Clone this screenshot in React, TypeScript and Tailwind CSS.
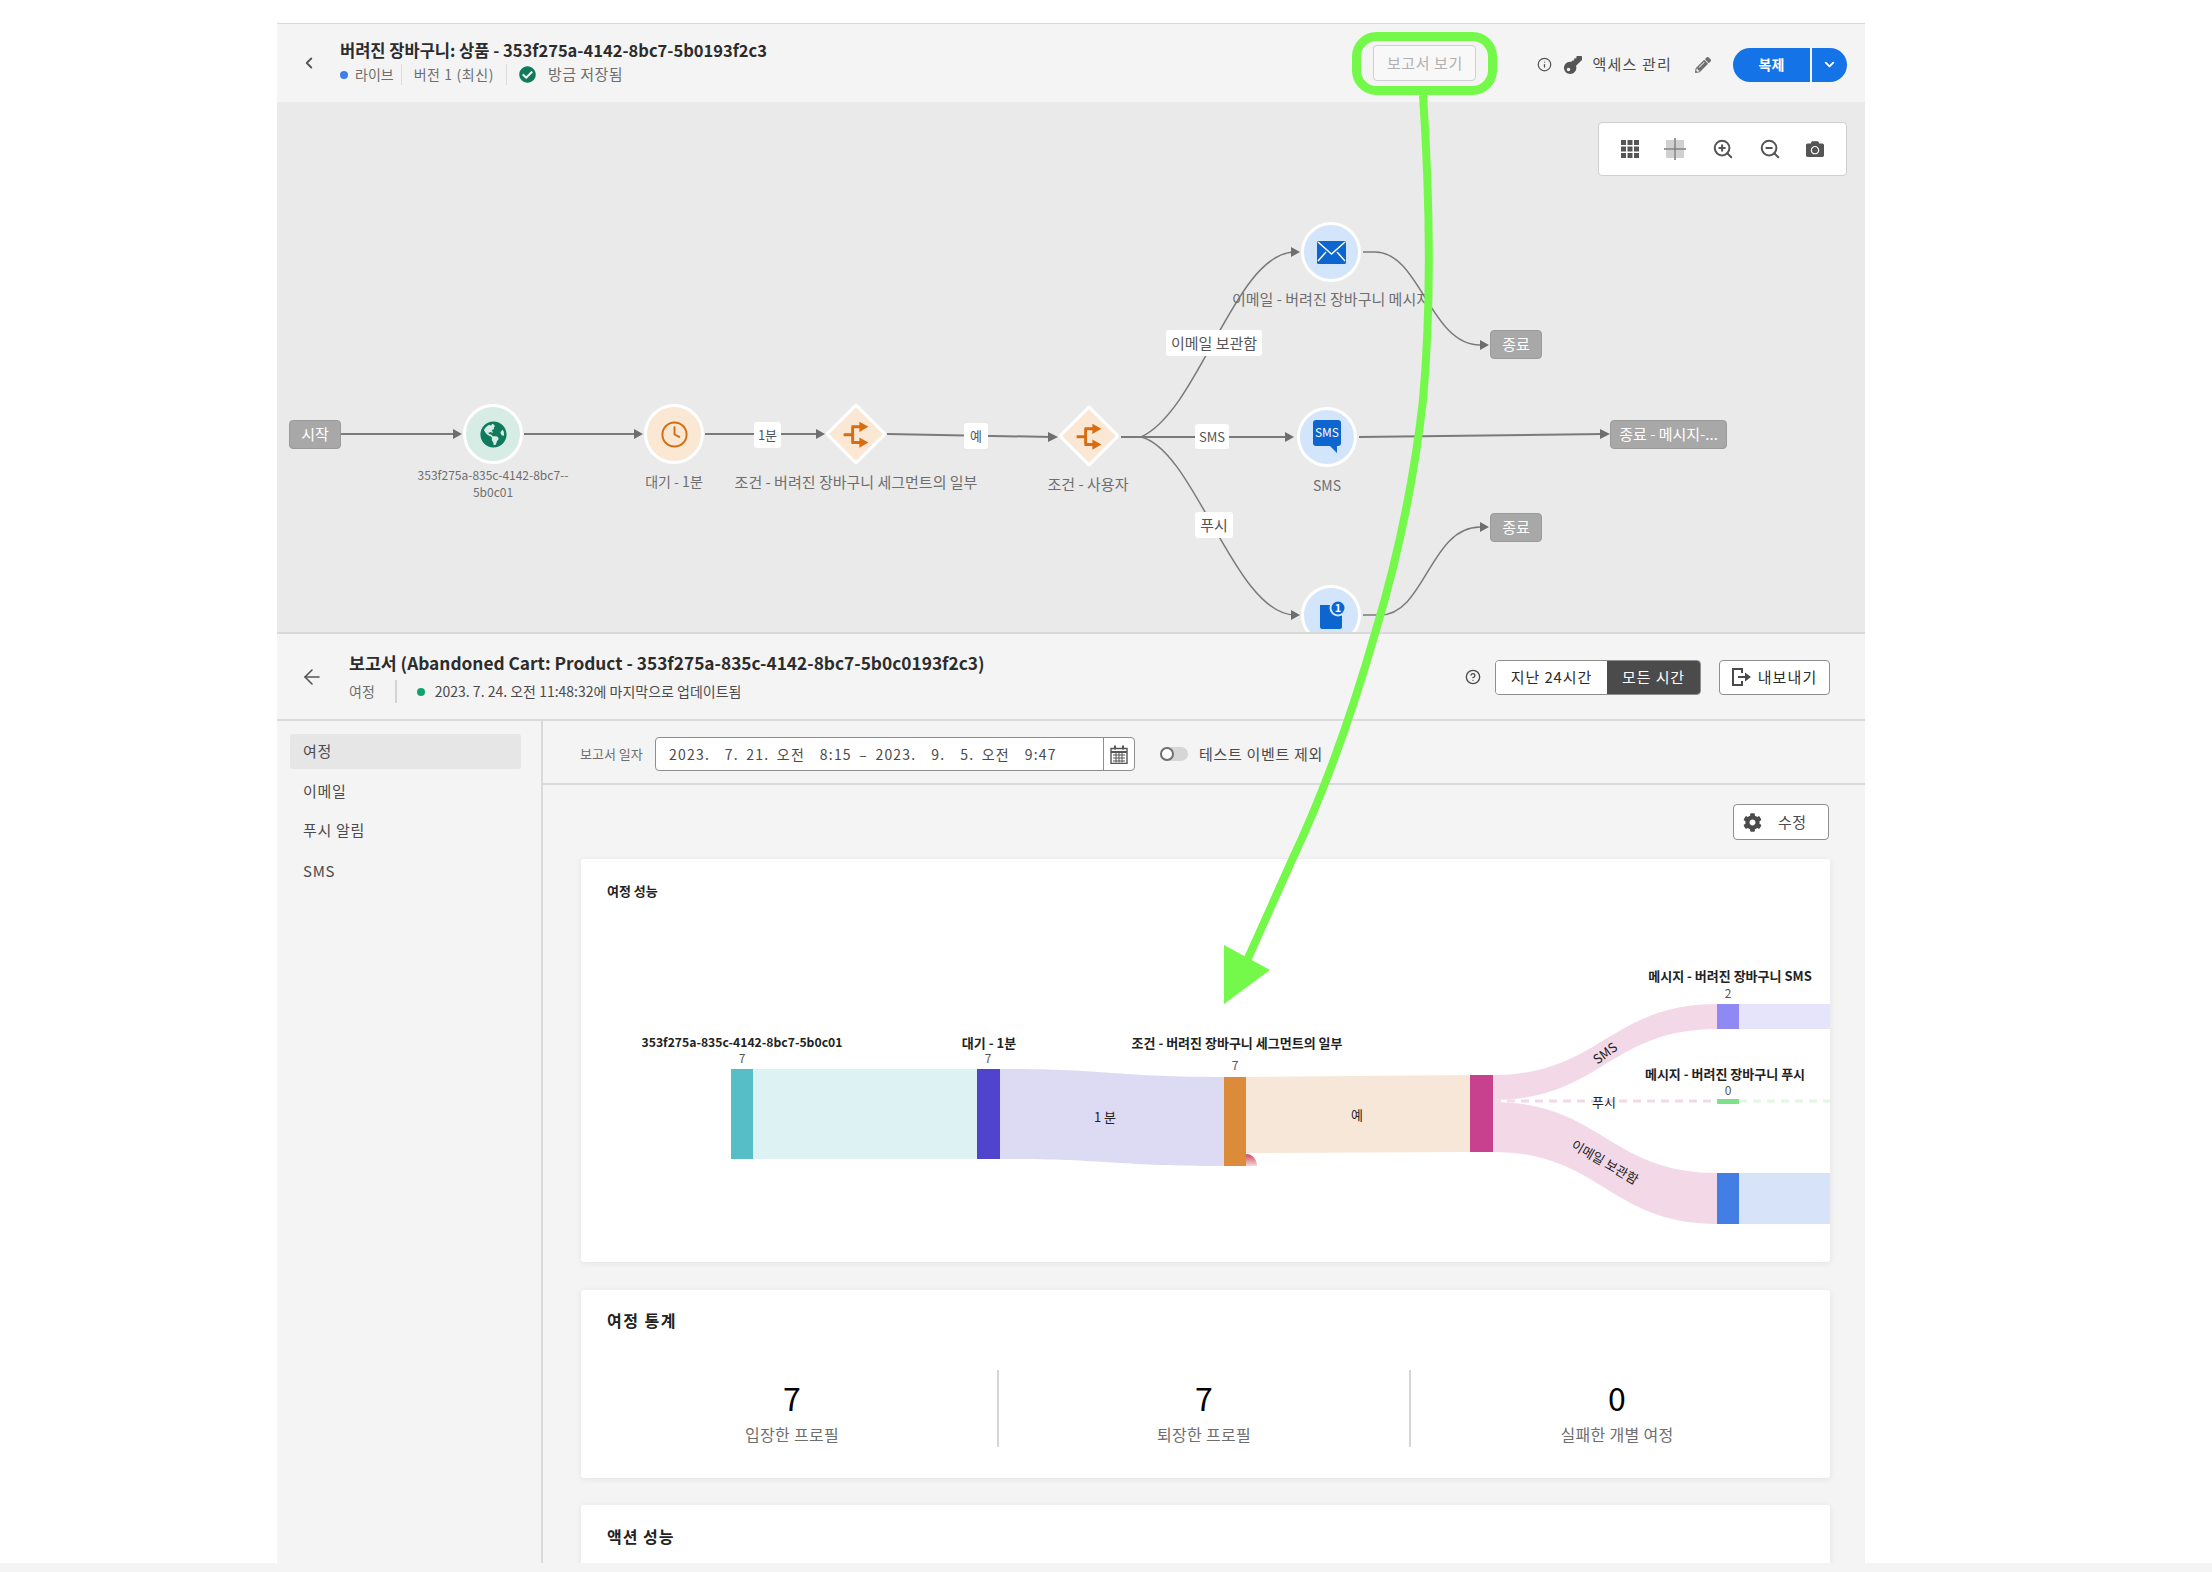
import { ChevronDown, ChevronLeft, CircleHelp, Clock, Info, ZoomIn, ZoomOut, ArrowLeft } from "lucide-react";
import { FaCamera, FaCheckCircle, FaCog, FaGlobeAmericas, FaKey, FaPencilAlt } from "react-icons/fa";

function BranchIcon() {
  return (
    <svg width="27" height="27" viewBox="0 0 24 24" className="-rotate-45">
      <path d="M1 12h8M9 5v14M8 5h9M8 19h9" fill="none" stroke="#d86c11" strokeWidth="2.6" />
      <path d="M15 0.5L23 5l-8 4.5zM15 14.5l8 4.5-8 4.5z" fill="#d86c11" />
    </svg>
  );
}

function Chip({ className, children }: { className: string; children: string }) {
  return (
    <div className={`absolute flex items-center justify-center rounded-[3px] bg-white text-[#555] ${className}`}>
      {children}
    </div>
  );
}

function EndNode({ className, children }: { className: string; children: string }) {
  return (
    <div className={`absolute flex h-[29px] items-center justify-center rounded-[4px] border border-[#9a9a9a] bg-[#a8a8a8] text-[15px] text-white ${className}`}>
      {children}
    </div>
  );
}

function Label({ className, children }: { className: string; children: React.ReactNode }) {
  return <div className={`absolute text-center leading-[17px] text-[#6e6e6e] ${className}`}>{children}</div>;
}

function Edges() {
  return (
    <svg className="absolute inset-0" width="1588" height="530" viewBox="0 0 1588 530" fill="none">
      <g stroke="#7a7a7a" strokeWidth="2">
        <path d="M64 332H180" />
        <path d="M247 332H360" />
        <path d="M428 332H541" />
        <path d="M610 332L775 335" />
        <path d="M844 335H1010" />
        <path d="M1082 335L1327 332" />
      </g>
      <g stroke="#7a7a7a" strokeWidth="1.5">
        <path d="M864 335C923 308 958 150 1018 150" />
        <path d="M864 335C918 348 958 513 1018 513" />
        <path d="M1086 150H1098C1143 150 1153 243 1203 243" />
        <path d="M1086 513H1103C1148 513 1153 425 1203 425" />
      </g>
      <g fill="#6e6e6e">
        <path d="M176 327l9 5-9 5z" />
        <path d="M357 327l9 5-9 5z" />
        <path d="M539 327l9 5-9 5z" />
        <path d="M771 330l10 5-10 5z" />
        <path d="M1008 330l9 5-9 5z" />
        <path d="M1014 145l9 5-9 5z" />
        <path d="M1014 508l9 5-9 5z" />
        <path d="M1203 238l9 5-9 5z" />
        <path d="M1203 420l9 5-9 5z" />
        <path d="M1323 327l10 5-10 5z" />
      </g>
    </svg>
  );
}

function Canvas() {
  return (
    <div className="relative h-[530px] overflow-hidden bg-[#eaeaea]">
      <Edges />
      <EndNode className="left-[12px] top-[318px] w-[52px]">시작</EndNode>

      <div className="absolute left-[186px] top-[302px] flex h-[60px] w-[60px] items-center justify-center rounded-full border-[3px] border-white bg-[#d6ece4]">
        <FaGlobeAmericas size={27} color="#0f7a5c" />
      </div>
      <Label className="left-[116px] top-[364px] w-[200px] text-[12px]">
        353f275a-835c-4142-8bc7--
        <br />
        5b0c01
      </Label>

      <div className="absolute left-[367px] top-[302px] flex h-[60px] w-[60px] items-center justify-center rounded-full border-[3px] border-white bg-[#fae8d4]">
        <Clock size={29} color="#d86c11" strokeWidth={1.6} />
      </div>
      <Label className="left-[347px] top-[371px] w-[100px] text-[14px]">대기 - 1분</Label>

      <Chip className="left-[477px] top-[320px] h-[26px] w-[27px] text-[13px]">1분</Chip>

      <div className="absolute left-[557px] top-[310px] flex h-[44px] w-[44px] rotate-45 items-center justify-center rounded-[2px] border-[3px] border-white bg-[#fae8d4]">
        <BranchIcon />
      </div>
      <Label className="left-[429px] top-[371px] w-[300px] text-[15px]">조건 - 버려진 장바구니 세그먼트의 일부</Label>

      <Chip className="left-[687px] top-[321px] h-[26px] w-[24px] text-[13px]">예</Chip>

      <div className="absolute left-[790px] top-[312px] flex h-[44px] w-[44px] rotate-45 items-center justify-center rounded-[2px] border-[3px] border-white bg-[#fae8d4]">
        <BranchIcon />
      </div>
      <Label className="left-[731px] top-[373px] w-[160px] text-[15px]">조건 - 사용자</Label>

      <Chip className="left-[889px] top-[228px] h-[26px] w-[96px] text-[15px]">이메일 보관함</Chip>
      <Chip className="left-[918px] top-[322px] h-[25px] w-[34px] text-[13px]">SMS</Chip>
      <Chip className="left-[918px] top-[410px] h-[26px] w-[38px] text-[15px]">푸시</Chip>

      <div className="absolute left-[1024px] top-[120px] flex h-[60px] w-[60px] items-center justify-center rounded-full border-[3px] border-white bg-[#d3e5fb]">
        <svg width="29" height="23" viewBox="0 0 29 23">
          <rect width="29" height="23" rx="1.5" fill="#0d66d0" />
          <path d="M1 1l13.5 12L28 1M1 20l8-9M28 20l-8-9" fill="none" stroke="#fff" strokeWidth="1.4" />
        </svg>
      </div>
      <Label className="left-[924px] top-[188px] w-[260px] whitespace-nowrap text-[15px]">이메일 - 버려진 장바구니 메시지</Label>

      <div className="absolute left-[1020px] top-[305px] flex h-[60px] w-[60px] items-center justify-center rounded-full border-[3px] border-white bg-[#d3e5fb]">
        <svg width="30" height="36" viewBox="0 0 30 36">
          <path d="M4 1h22a3 3 0 0 1 3 3v20a3 3 0 0 1-3 3h-1v7l-7-7H4a3 3 0 0 1-3-3V4a3 3 0 0 1 3-3z" fill="#0d66d0" />
          <text x="15" y="18" textAnchor="middle" fill="#fff" className="text-[12px]">SMS</text>
        </svg>
      </div>
      <Label className="left-[1000px] top-[375px] w-[100px] text-[14px]">SMS</Label>

      <div className="absolute left-[1024px] top-[483px] flex h-[60px] w-[60px] items-center justify-center rounded-full border-[3px] border-white bg-[#d3e5fb]">
        <svg width="30" height="32" viewBox="0 0 30 32">
          <path d="M4 6h14v6h8v16a2 2 0 0 1-2 2H6a2 2 0 0 1-2-2z" fill="#0d66d0" />
          <circle cx="22" cy="9" r="8.5" fill="#d3e5fb" />
          <circle cx="22" cy="9" r="6.5" fill="#0d66d0" />
          <text x="22" y="13" textAnchor="middle" fill="#fff" className="text-[11px] font-bold">1</text>
        </svg>
      </div>

      <EndNode className="left-[1213px] top-[228px] w-[52px]">종료</EndNode>
      <EndNode className="left-[1333px] top-[318px] w-[117px]">종료 - 메시지-...</EndNode>
      <EndNode className="left-[1213px] top-[411px] w-[52px]">종료</EndNode>

      <div className="absolute left-[1321px] top-[20px] flex h-[54px] w-[249px] items-center justify-between rounded-[4px] border border-[#cfcfcf] bg-white px-[22px] text-[#555]">
        <svg width="18" height="18" viewBox="0 0 18 18" fill="#555">
          <path d="M0 0h5v5H0zM6.500 0h5v5h-5zM13 0h5v5h-5zM0 6.500h5v5H0zM6.500 6.500h5v5h-5zM13 6.500h5v5h-5zM0 13h5v5H0zM6.500 13h5v5h-5zM13 13h5v5h-5z" />
        </svg>
        <svg width="22" height="22" viewBox="0 0 22 22">
          <path d="M2 2h8v8H2zM12 2h8v8h-8zM2 12h8v8H2zM12 12h8v8h-8z" fill="#d0d0d0" />
          <path d="M11 0v22M0 11h22" stroke="#777" strokeWidth="1.5" />
        </svg>
        <ZoomIn size={22} strokeWidth={2.2} />
        <ZoomOut size={22} strokeWidth={2.2} />
        <FaCamera size={18} />
      </div>
    </div>
  );
}

function TopBar() {
  return (
    <div className="flex h-[78px] items-center bg-[#f4f4f4] pr-[18px]">
      <div className="flex w-[63px] justify-center">
        <ChevronLeft size={18} color="#555" strokeWidth={2.5} />
      </div>
      <div className="pb-[4px]">
        <div className="text-[16.500px] font-semibold leading-[22px] text-[#2c2c2c]">버려진 장바구니: 상품 - 353f275a-4142-8bc7-5b0193f2c3</div>
        <div className="mt-[5px] flex h-[18px] items-center text-[14px] text-[#6e6e6e]">
          <span className="h-[8px] w-[8px] rounded-full bg-[#3f7de8]" />
          <span className="ml-[7px] border-r border-[#dcdcdc] pr-[7px]">라이브</span>
          <span className="ml-[12px] border-r border-[#dcdcdc] pr-[12px] tracking-[0.6px]">버전 1 (최신)</span>
          <FaCheckCircle size={17} color="#0f7a5c" className="ml-[12px]" />
          <span className="ml-[12px] text-[15px] tracking-[0.4px]">방금 저장됨</span>
        </div>
      </div>
      <button className="ml-auto flex h-[36px] w-[103px] items-center justify-center rounded-[4px] border border-[#d0d0d0] bg-[#f8f8f8] text-[15px] tracking-[0.6px] text-[#b0b0b0]">보고서 보기</button>
      <div className="flex items-center pt-[3px]">
        <Info size={15} color="#555" className="ml-[61px]" />
        <FaKey size={18} color="#555" className="ml-[12px] rotate-180" />
        <span className="ml-[10px] text-[15px] tracking-[1.2px] text-[#4b4b4b]">액세스 관리</span>
        <FaPencilAlt size={16} color="#6e6e6e" className="ml-[23px]" />
        <div className="ml-[22px] flex h-[34px] w-[114px] overflow-hidden rounded-full text-white">
          <div className="flex w-[77px] items-center justify-center bg-[#1473e6] text-[14px] font-semibold">복제</div>
          <div className="ml-[2px] flex flex-1 items-center justify-center bg-[#1473e6]">
            <ChevronDown size={15} strokeWidth={3} />
          </div>
        </div>
      </div>
    </div>
  );
}

function ReportHeader() {
  return (
    <div className="flex h-[89px] items-center border-y-2 border-[#dadada] bg-[#f4f4f4] pr-[35px] pt-[1px]">
      <div className="flex w-[72px] justify-center">
        <ArrowLeft size={24} color="#555" strokeWidth={1.6} className="mr-[2px]" />
      </div>
      <div>
        <div className="text-[17.300px] font-semibold leading-[24px] text-[#2c2c2c]">보고서 (Abandoned Cart: Product - 353f275a-835c-4142-8bc7-5b0c0193f2c3)</div>
        <div className="mt-[5px] flex h-[23px] items-center text-[14px] text-[#4b4b4b]">
          <span className="text-[#6e6e6e]">여정</span>
          <span className="ml-[20px] h-full w-[2px] bg-[#d4d4d4]" />
          <span className="ml-[20px] h-[8px] w-[8px] rounded-full bg-[#12a26c]" />
          <span className="ml-[10px]">2023. 7. 24. 오전 11:48:32에 마지막으로 업데이트됨</span>
        </div>
      </div>
      <CircleHelp size={16} color="#4b4b4b" strokeWidth={2} className="ml-auto" />
      <div className="ml-[14px] flex h-[35px] w-[206px] overflow-hidden rounded-[4px] border border-[#8e8e8e] text-[15px] tracking-[0.9px]">
        <div className="flex w-[111px] items-center justify-center bg-white text-[#2c2c2c]">지난 24시간</div>
        <div className="flex flex-1 items-center justify-center bg-[#4b4b4b] text-white">모든 시간</div>
      </div>
      <button className="ml-[18px] flex h-[35px] w-[111px] items-center justify-center gap-[7px] rounded-[4px] border border-[#8e8e8e] bg-white text-[15px] tracking-[1.1px] text-[#2c2c2c]">
        <svg width="19" height="18" viewBox="0 0 19 18" fill="#4b4b4b">
          <path d="M0 0h11v5H9V2H2v14h7v-3h2v5H0z" />
          <path d="M6 8h7V4.500L19 9l-6 4.500V10H6z" />
        </svg>
        내보내기
      </button>
    </div>
  );
}

function Sidebar() {
  return (
    <div className="h-full w-[266px] shrink-0 border-r-2 border-[#dadada] pl-[13px] pr-[20px] pt-[13px] text-[15px] tracking-[0.7px] text-[#4b4b4b]">
      <div className="flex h-[35px] items-center rounded-[3px] bg-[#e6e6e6] pl-[13px]">여정</div>
      <div className="mt-[5px] flex h-[35px] items-center pl-[13px]">이메일</div>
      <div className="mt-[4px] flex h-[35px] items-center pl-[13px]">푸시 알림</div>
      <div className="mt-[6px] flex h-[35px] items-center pl-[13px]">SMS</div>
    </div>
  );
}

function DateBar() {
  return (
    <div className="flex h-[64px] items-center border-b-2 border-[#dadada] pl-[37px] pt-[4px]">
      <span className="w-[75px] text-[13px] text-[#6e6e6e]">보고서 일자</span>
      <div className="flex h-[34px] w-[480px] items-center rounded-[4px] border border-[#8e8e8e] bg-white text-[14px] text-[#4b4b4b]">
        <span className="w-[447px] whitespace-pre pl-[13px] tracking-[1.2px] [word-spacing:3.1px]">2023.  7. 21. 오전  8:15 – 2023.  9.  5. 오전  9:47</span>
        <div className="flex h-full flex-1 items-center justify-center border-l border-[#8e8e8e]">
          <svg width="18" height="19" viewBox="0 0 18 19" fill="none" stroke="#555">
            <path d="M1 3.500h16v15H1z" strokeWidth="1.400" />
            <path d="M1 7h16" strokeWidth="2" />
            <path d="M5 0.500v4M13 0.500v4" strokeWidth="2" />
            <path d="M3 10h12M3 13h12M3 16h12M6 8v9.500M9 8v9.500M12 8v9.500" strokeWidth="1" />
          </svg>
        </div>
      </div>
      <div className="relative ml-[25px] h-[14px] w-[28px] rounded-full bg-[#d6d6d6]">
        <div className="absolute left-0 top-0 h-[14px] w-[14px] rounded-full border-2 border-[#6e6e6e] bg-white" />
      </div>
      <span className="ml-[11px] text-[15px] tracking-[0.7px] text-[#4b4b4b]">테스트 이벤트 제외</span>
    </div>
  );
}

function Sankey() {
  return (
    <svg className="block" width="1249" height="352" viewBox="581 910 1249 352">
      <defs>
        <linearGradient id="red-tip" x1="0" y1="0" x2="0" y2="1">
          <stop offset="0" stopColor="#cc4a58" />
          <stop offset="1" stopColor="#f4d8da" />
        </linearGradient>
      </defs>
      <path d="M753 1069H977V1159H753z" fill="#ddf2f2" />
      <path d="M1000 1069C1112 1069 1112 1077 1224 1077V1166C1112 1166 1112 1159 1000 1159z" fill="#dddaf4" />
      <path d="M1246 1077L1470 1075V1152L1246 1153z" fill="#f7e7d8" />
      <path d="M1246 1154C1253 1154 1257 1160 1257 1166H1246z" fill="url(#red-tip)" />
      <path d="M1493 1075C1600 1075 1610 1004 1717 1004V1029C1610 1029 1600 1100 1493 1100z" fill="#f3d9e8" />
      <path d="M1493 1102C1600 1102 1610 1173 1717 1173V1224C1610 1224 1600 1152 1493 1152z" fill="#f3d9e8" />
      <path d="M1493 1101H1717" stroke="#f3d9e8" strokeWidth="3" strokeDasharray="8 6" />
      <path d="M1739 1101H1830" stroke="#e2f8e2" strokeWidth="3" strokeDasharray="8 6" />
      <path d="M1739 1004H1830V1029H1739z" fill="#e6e4fa" />
      <path d="M1739 1173H1830V1224H1739z" fill="#d6e3f8" />

      <path d="M731 1069H753V1159H731z" fill="#56bec6" />
      <path d="M977 1069H1000V1159H977z" fill="#5044cc" />
      <path d="M1224 1077H1246V1166H1224z" fill="#db8b3a" />
      <path d="M1470 1075H1493V1152H1470z" fill="#c8418e" />
      <path d="M1717 1004H1739V1029H1717z" fill="#9089f3" />
      <path d="M1717 1099H1739V1104H1717z" fill="#7fe08a" />
      <path d="M1717 1173H1739V1224H1717z" fill="#437ee4" />

      <g className="text-[13px] font-semibold" fill="#222" textAnchor="middle">
        <text x="742" y="1047" className="text-[12.200px]">353f275a-835c-4142-8bc7-5b0c01</text>
        <text x="989" y="1048">대기 - 1분</text>
        <text x="1237" y="1048">조건 - 버려진 장바구니 세그먼트의 일부</text>
        <text x="1730" y="981">메시지 - 버려진 장바구니 SMS</text>
        <text x="1725" y="1079">메시지 - 버려진 장바구니 푸시</text>
      </g>
      <g className="text-[12px]" fill="#555" textAnchor="middle">
        <text x="742" y="1063">7</text>
        <text x="988" y="1063">7</text>
        <text x="1235" y="1070">7</text>
        <text x="1728" y="998">2</text>
        <text x="1728" y="1095">0</text>
      </g>
      <g className="text-[13px]" fill="#222" textAnchor="middle">
        <text x="1105" y="1122">1 분</text>
        <text x="1357" y="1120">예</text>
        <text x="1604" y="1107">푸시</text>
        <text x="1605" y="1058" transform="rotate(-37 1605 1053)">SMS</text>
        <text x="1605" y="1167" transform="rotate(30 1605 1162)">이메일 보관함</text>
      </g>
    </svg>
  );
}

const stats = [
  { value: "7", label: "입장한 프로필" },
  { value: "7", label: "퇴장한 프로필" },
  { value: "0", label: "실패한 개별 여정" },
];

function Report() {
  return (
    <div className="h-full overflow-hidden">
      <DateBar />
      <div className="pl-[38px] pr-[35px] pt-[19px]">
        <div className="flex justify-end pr-[1px]">
          <button className="flex h-[36px] w-[96px] items-center rounded-[4px] border border-[#8e8e8e] bg-white pl-[9px] text-[15px] text-[#4b4b4b]">
            <FaCog size={19} color="#4b4b4b" />
            <span className="ml-[16px] tracking-[0.5px]">수정</span>
          </button>
        </div>

        <div className="mt-[19px] h-[403px] rounded-[3px] bg-white shadow-[0_1px_6px_rgba(0,0,0,0.08)]">
          <div className="h-[51px] pl-[26px] pt-[23px] text-[13px] font-semibold leading-[18px] text-[#222]">여정 성능</div>
          <Sankey />
        </div>

        <div className="mt-[28px] h-[188px] rounded-[3px] bg-white pl-[6px] pt-[20px] shadow-[0_1px_6px_rgba(0,0,0,0.08)]">
          <div className="pl-[20px] text-[16px] font-semibold leading-[20px] tracking-[1.5px] text-[#222]">여정 통계</div>
          <div className="mt-[40px] flex h-[77px]">
            {stats.map((s, i) => (
              <div key={i} className="flex w-[412px] flex-col items-center border-[#d6d6d6] pt-[7px] [&:not(:last-child)]:border-r-2">
                <div className="text-[32px] leading-[40px] text-black">{s.value}</div>
                <div className="mt-[7px] text-[16px] leading-[20px] tracking-[0.3px] text-[#6e6e6e]">{s.label}</div>
              </div>
            ))}
          </div>
        </div>

        <div className="mt-[27px] h-[100px] rounded-[3px] bg-white pl-[26px] pt-[21px] shadow-[0_1px_6px_rgba(0,0,0,0.08)]">
          <div className="text-[16px] font-semibold leading-[20px] tracking-[1px] text-[#222]">액션 성능</div>
        </div>
      </div>
    </div>
  );
}

export default function App() {
  return (
    <div className="relative flex h-[1572px] w-[2212px] flex-col overflow-hidden bg-white font-['Noto_Sans_CJK_KR',sans-serif]">
      <div className="ml-[277px] mt-[23px] flex h-[1540px] w-[1588px] flex-col border-t border-[#d8d8d8] bg-[#f4f4f4]">
        <TopBar />
        <Canvas />
        <ReportHeader />
        <div className="flex min-h-0 flex-1">
          <Sidebar />
          <div className="min-w-0 flex-1">
            <Report />
          </div>
        </div>
      </div>
      <div className="flex-1 bg-[#f4f4f4]" />

      {/* green callout drawn over the screenshot */}
      <svg className="pointer-events-none absolute inset-0" width="2212" height="1572" fill="none">
        <rect x="1356.500" y="36.500" width="136" height="54" rx="20" stroke="#74f94a" strokeWidth="9" />
        <path d="M1423 95C1430 200 1432 300 1423 400C1414 480 1397 560 1376 630C1356 700 1330 780 1292 860L1245 965" stroke="#74f94a" strokeWidth="8" />
        <path d="M1224 945L1270 970L1224 1004z" fill="#74f94a" />
      </svg>
    </div>
  );
}
